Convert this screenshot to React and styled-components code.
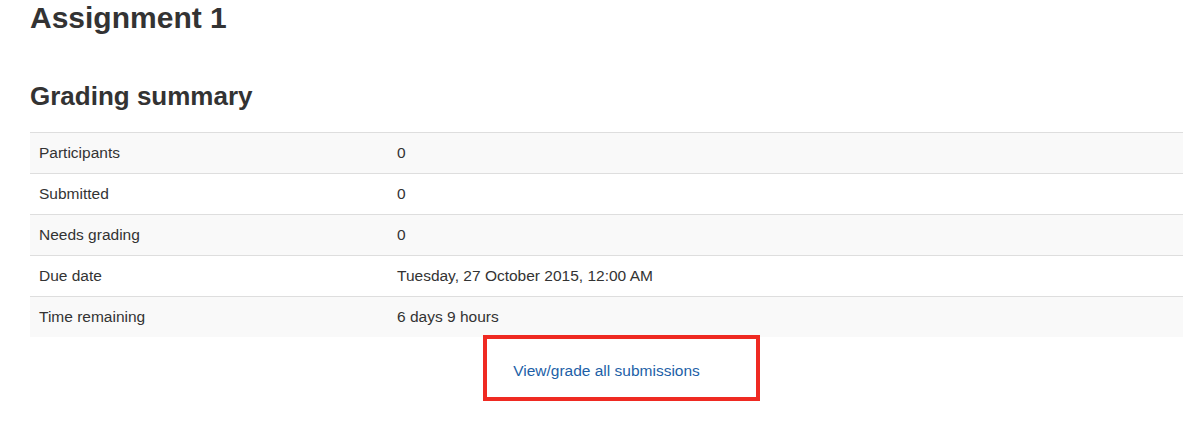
import React from 'react';
import styled, { createGlobalStyle } from 'styled-components';

const GlobalStyle = createGlobalStyle`
  body {
    margin: 0;
    background: #fff;
    font-family: "Liberation Sans", Arial, sans-serif;
    color: #333;
  }
`;

const rows = [
  { label: 'Participants', value: '0' },
  { label: 'Submitted', value: '0' },
  { label: 'Needs grading', value: '0' },
  { label: 'Due date', value: 'Tuesday, 27 October 2015, 12:00 AM' },
  { label: 'Time remaining', value: '6 days 9 hours' },
];

function App() {
  return (
    <Page>
      <GlobalStyle />
      <Title>Assignment 1</Title>
      <Heading>Grading summary</Heading>
      <SummaryTable>
        <tbody>
          {rows.map((row, i) => (
            <Row key={row.label} $striped={i % 2 === 0}>
              <LabelCell>{row.label}</LabelCell>
              <Cell>{row.value}</Cell>
            </Row>
          ))}
        </tbody>
      </SummaryTable>
      <LinkRow>
        <Highlighted>
          <GradeLink href="#">View/grade all submissions</GradeLink>
        </Highlighted>
      </LinkRow>
    </Page>
  );
}

export default App;

const Page = styled.div`
  padding: 0 17px 40px 30px;
`;

const Title = styled.h1`
  margin: 0;
  font-size: 30px;
  line-height: 36px;
  font-weight: bold;
  color: #333;
`;

const Heading = styled.h2`
  margin: 44px 0 20px;
  font-size: 26px;
  line-height: 32px;
  font-weight: bold;
  color: #333;
`;

const SummaryTable = styled.table`
  width: 100%;
  border-collapse: collapse;
  font-size: 15.5px;
  line-height: 20px;
`;

const Row = styled.tr`
  background: ${(p) => (p.$striped ? '#f9f9f9' : '#fff')};
`;

const Cell = styled.td`
  padding: 10px 9px;
  border-top: 1px solid #dedede;
  text-align: left;
  vertical-align: top;
`;

const LabelCell = styled(Cell)`
  width: 340px;
`;

const LinkRow = styled.div`
  display: flex;
  justify-content: center;
  padding: 24px 0 20px;
`;

const Highlighted = styled.span`
  position: relative;
  display: inline-block;

  &::after {
    content: '';
    position: absolute;
    top: -26px;
    bottom: -20px;
    left: -30px;
    right: -60px;
    border: 4px solid #ef2a22;
    pointer-events: none;
  }
`;

const GradeLink = styled.a`
  font-size: 15.5px;
  line-height: 20px;
  color: #1d5fa7;
  text-decoration: none;
`;
